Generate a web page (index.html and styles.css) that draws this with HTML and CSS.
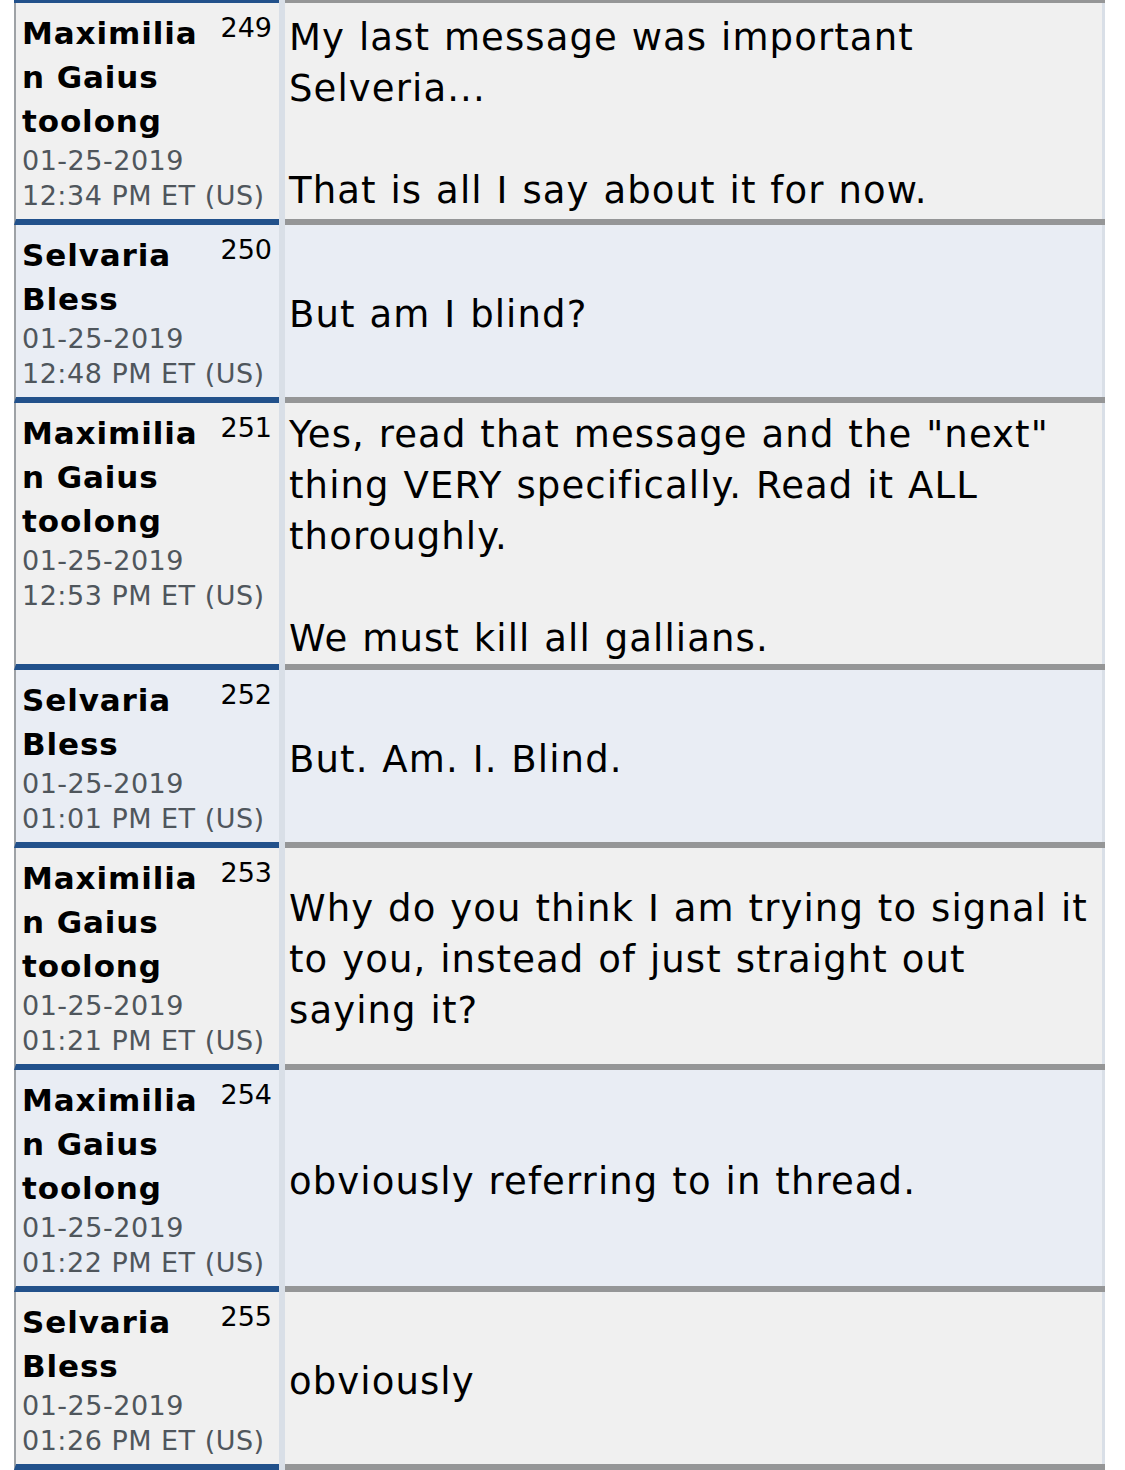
FILE: index.html
```html
<!DOCTYPE html>
<html>
<head>
<meta charset="utf-8">
<link rel="stylesheet" href="styles.css">
</head>
<body>
<div class="thread">
  <div class="edge"><div class="edge-l"></div><div class="edge-r"></div></div>

  <div class="post alt1">
    <div class="meta">
      <div class="head"><div class="name">Maximilian Gaius toolong</div><div class="num">249</div></div>
      <div class="date">01-25-2019</div>
      <div class="date">12:34 PM ET (US)</div>
    </div>
    <div class="msg"><div class="body">My last message was important Selveria...<br><br>That is all I say about it for now.</div></div>
  </div>

  <div class="post alt2">
    <div class="meta">
      <div class="head"><div class="name">Selvaria Bless</div><div class="num">250</div></div>
      <div class="date">01-25-2019</div>
      <div class="date">12:48 PM ET (US)</div>
    </div>
    <div class="msg"><div class="body">But am I blind?</div></div>
  </div>

  <div class="post alt1">
    <div class="meta">
      <div class="head"><div class="name">Maximilian Gaius toolong</div><div class="num">251</div></div>
      <div class="date">01-25-2019</div>
      <div class="date">12:53 PM ET (US)</div>
    </div>
    <div class="msg"><div class="body">Yes, read that message and the "next" thing VERY specifically. Read it ALL thoroughly.<br><br>We must kill all gallians.</div></div>
  </div>

  <div class="post alt2">
    <div class="meta">
      <div class="head"><div class="name">Selvaria Bless</div><div class="num">252</div></div>
      <div class="date">01-25-2019</div>
      <div class="date">01:01 PM ET (US)</div>
    </div>
    <div class="msg"><div class="body">But. Am. I. Blind.</div></div>
  </div>

  <div class="post alt1">
    <div class="meta">
      <div class="head"><div class="name">Maximilian Gaius toolong</div><div class="num">253</div></div>
      <div class="date">01-25-2019</div>
      <div class="date">01:21 PM ET (US)</div>
    </div>
    <div class="msg"><div class="body">Why do you think I am trying to signal it to you, instead of just straight out saying it?</div></div>
  </div>

  <div class="post alt2">
    <div class="meta">
      <div class="head"><div class="name">Maximilian Gaius toolong</div><div class="num">254</div></div>
      <div class="date">01-25-2019</div>
      <div class="date">01:22 PM ET (US)</div>
    </div>
    <div class="msg"><div class="body">obviously referring to in thread.</div></div>
  </div>

  <div class="post alt1">
    <div class="meta">
      <div class="head"><div class="name">Selvaria Bless</div><div class="num">255</div></div>
      <div class="date">01-25-2019</div>
      <div class="date">01:26 PM ET (US)</div>
    </div>
    <div class="msg"><div class="body">obviously</div></div>
  </div>
</div>
</body>
</html>
```

FILE: styles.css
```css
html, body {
  margin: 0;
  padding: 0;
  background: #ffffff;
}

body {
  font-family: "DejaVu Sans", Verdana, sans-serif;
  color: #000000;
}

.thread {
  margin-left: 14px;
  width: 1091px;
  margin-top: -3px;
  background: #d9dfe7;
}

.edge,
.post {
  display: grid;
  grid-template-columns: 265px 820px;
  column-gap: 6px;
}

.edge-l {
  height: 0;
  border-bottom: 6px solid #22518b;
}

.edge-r {
  height: 0;
  border-bottom: 6px solid #959697;
}

.meta {
  border-left: 2px solid #9ea2a6;
  border-bottom: 6px solid #22518b;
  padding: 8px 7px 6px 6px;
}

.alt1 .meta,
.alt1 .msg {
  background: #f0f0f0;
}

.alt2 .meta,
.alt2 .msg {
  background: #e9edf4;
}

.head {
  display: flex;
  align-items: flex-start;
}

.name {
  width: 186px;
  font-weight: bold;
  font-size: 31px;
  letter-spacing: 0.9px;
  line-height: 44px;
  overflow-wrap: anywhere;
}

.num {
  margin-left: auto;
  font-size: 27px;
  line-height: 33px;
}

.date {
  font-size: 27px;
  letter-spacing: 0.5px;
  line-height: 35px;
  color: #4f565c;
  white-space: nowrap;
}

.msg {
  display: flex;
  align-items: center;
  border-bottom: 6px solid #959697;
  box-shadow: inset -3px 0 0 #d9dfe7;
  padding: 6px 10px 0 4px;
}

.body {
  font-size: 37px;
  letter-spacing: 1.1px;
  word-spacing: 1px;
  line-height: 51px;
}
```
